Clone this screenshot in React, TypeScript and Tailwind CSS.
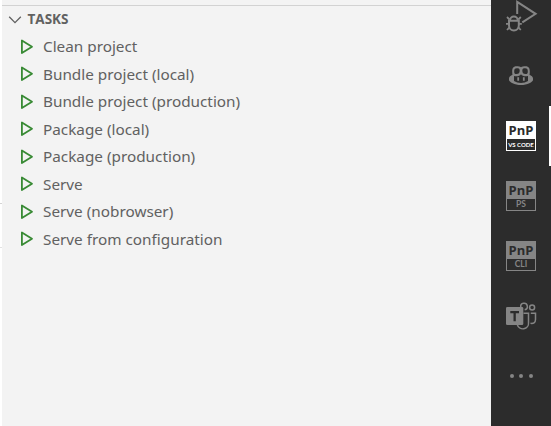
import type { ReactNode } from "react";

const tasks = [
  "Clean project",
  "Bundle project (local)",
  "Bundle project (production)",
  "Package (local)",
  "Package (production)",
  "Serve",
  "Serve (nobrowser)",
  "Serve from configuration",
];

function PlayIcon() {
  return (
    <svg className="h-4 w-4 shrink-0" viewBox="0 0 16 16" fill="none" stroke="#388a34" strokeWidth="1.8" strokeLinejoin="round">
      <path d="M3.900 1.500V14L14 7.700Z" />
    </svg>
  );
}

function DebugIcon() {
  return (
    <svg className="h-[34px] w-[34px]" viewBox="0 0 34 34" fill="none" stroke="#858585" strokeWidth="2">
      <path d="M13.200 15V2.900L31.600 14.800L18.300 23.300" />
      <path d="M6 21.500a3.900 3.900 0 0 1 7.800 0M5 21.800H14.800V26.500a4.900 4.900 0 0 1-9.800 0Z" />
      <path d="M5.500 20.500 3 18M14.300 20.500l2.500-2.500M2 24.800h3M14.800 24.800h3M5.700 28.200 3 31M14.100 28.200l2.700 2.800" strokeWidth="1.800" />
    </svg>
  );
}

function CopilotIcon() {
  return (
    <svg className="h-[26px] w-[26px]" viewBox="0 0 26 26">
      <path
        fill="#858585"
        fillRule="evenodd"
        d="M8.500 3.200c2 0 3.600.1 4.500 1.100.9-1 2.500-1.100 4.500-1.100 3.500 0 4.300 2.400 4.300 5.300 0 1.500-.1 2.500-.3 3.300 1.800.8 3.500 2.200 3.500 3.700V17c0 1.800-5.700 5.100-12 5.100S1 18.800 1 17v-1.500c0-1.500 1.700-2.900 3.500-3.700-.2-.8-.3-1.800-.3-3.300 0-2.900.8-5.300 4.300-5.300ZM13 11.300c-1.300 1.900-4 2.400-7 1.800v4.800c2 1.200 4.400 2 7 2s5-.8 7-2v-4.800c-3 .6-5.700.1-7-1.800ZM8.800 5.300c-2 0-2.600 1-2.600 3.100 0 1.800.5 2.700 2.200 2.700 2.300 0 3.300-1.200 3.300-3.600 0-1.700-.8-2.200-2.900-2.200Zm8.400 0c-2.100 0-2.900.5-2.900 2.200 0 2.400 1 3.600 3.300 3.600 1.700 0 2.200-.9 2.200-2.700 0-2.100-.6-3.100-2.600-3.100Z"
      />
      <path d="M10.200 14.200v3.600M15.800 14.200v3.600" stroke="#858585" strokeWidth="1.800" />
    </svg>
  );
}

function TeamsIcon() {
  return (
    <svg className="h-[32px] w-[32px]" viewBox="0 0 32 32" fill="none" stroke="#858585" strokeWidth="1.500">
      <path d="M15.800 7.200a3.300 3.300 0 1 1 3.900 2.600" />
      <circle cx="27.100" cy="7.500" r="2.500" />
      <path d="M18.500 13.300H23.500V22.500a5.700 5.700 0 0 1-11.200 2" />
      <path d="M25.800 13.300h4.700v6.200c0 3.400-2.200 4.300-5 3.800" />
      <rect x="1" y="7" width="17.300" height="18" rx="1.300" fill="#858585" stroke="none" />
      <path d="M5.300 12.200h8.700M9.650 12.200v9" stroke="#2c2c2c" strokeWidth="2.300" />
    </svg>
  );
}

function PnpIcon({ label, active = false }: { label: string; active?: boolean }) {
  return (
    <div className={`flex h-[30px] w-[30px] flex-col p-px text-[#2c2c2c] ${active ? "bg-white" : "bg-[#858585]"}`}>
      <div className="flex h-[17px] items-center justify-center font-['Open_Sans',sans-serif] text-[13px] leading-none font-bold">PnP</div>
      <div className={`flex h-[11px] items-center justify-center bg-[#2c2c2c] font-['Lato','Open_Sans',sans-serif] leading-none whitespace-nowrap ${active ? "text-[6px] font-bold text-white" : "text-[8.500px] font-bold text-[#858585]"}`}>
        {label}
      </div>
    </div>
  );
}

function ActivityItem({ children, active = false }: { children: ReactNode; active?: boolean }) {
  return (
    <div className={`flex h-[60px] w-[60px] shrink-0 items-center justify-center ${active ? "border-r-2 border-white pl-0.5" : ""}`}>
      {children}
    </div>
  );
}

export default function App() {
  return (
    <div className="flex h-[426px] w-[551px] overflow-hidden bg-[#f3f3f3] font-['Noto_Sans','Open_Sans',sans-serif]">
      <div className="flex w-0.5 shrink-0 flex-col bg-white">
        <div className="mt-[203px] h-px bg-[#d4d4d4]" />
        <div className="mt-[43px] h-px bg-[#e2e2e2]" />
      </div>
      <main className="w-[489px] shrink-0 text-[#616161]">
        <div className="h-[6px] border-b border-[#d2d2d2]" />
        <div className="flex h-[27px] items-center pl-[6px]">
          <svg className="h-[14px] w-[14px]" viewBox="0 0 14 14" fill="none" stroke="#616161" strokeWidth="1.300">
            <path d="M1.200 3.800 7 9.600 12.800 3.800" />
          </svg>
          <span className="ml-[5.500px] font-['Open_Sans',sans-serif] text-[13.500px] leading-none font-bold">TASKS</span>
        </div>
        <ul>
          {tasks.map((task) => (
            <li key={task} className="flex h-[27.500px] items-center pl-[16px]">
              <PlayIcon />
              <span className="ml-[9px] text-[15.300px] leading-none whitespace-nowrap">{task}</span>
            </li>
          ))}
        </ul>
      </main>
      <aside className="-mt-[14px] flex h-[440px] w-[60px] shrink-0 flex-col bg-[#2c2c2c]">
        <ActivityItem><DebugIcon /></ActivityItem>
        <ActivityItem><CopilotIcon /></ActivityItem>
        <ActivityItem active><PnpIcon label="VS CODE" active /></ActivityItem>
        <ActivityItem><PnpIcon label="PS" /></ActivityItem>
        <ActivityItem><PnpIcon label="CLI" /></ActivityItem>
        <ActivityItem><TeamsIcon /></ActivityItem>
        <ActivityItem>
          <div className="flex gap-[5.500px]">
            <i className="h-1 w-1 rounded-full bg-[#858585]" />
            <i className="h-1 w-1 rounded-full bg-[#858585]" />
            <i className="h-1 w-1 rounded-full bg-[#858585]" />
          </div>
        </ActivityItem>
      </aside>
    </div>
  );
}
